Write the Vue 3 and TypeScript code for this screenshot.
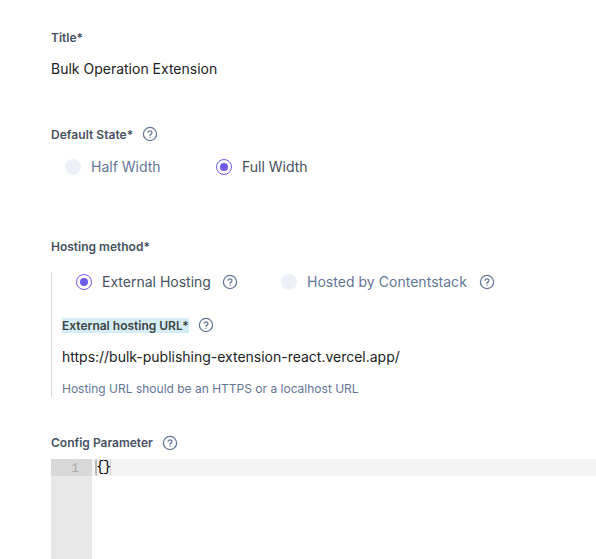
<script setup lang="ts">
import { h } from 'vue'

const HelpIcon = () =>
  h('svg', { class: 'help', viewBox: '0 0 16 16', width: 16, height: 16, fill: 'none', stroke: '#647696', 'stroke-width': 1.25, 'stroke-linecap': 'round', 'stroke-linejoin': 'round' }, [
    h('circle', { cx: 8, cy: 8, r: 6.6 }),
    h('path', { d: 'M6.1 6.2a2 2 0 0 1 3.9.5c0 1.3-2 1.5-2 2.6' }),
    h('path', { d: 'M8 11.2v.1' }),
  ])
</script>

<template>
  <main class="form">
    <section class="field title">
      <div class="label raised"><span>Title*</span></div>
      <div class="value">Bulk Operation Extension</div>
    </section>
    <section class="field state">
      <div class="label"><span class="state-name">Default State*</span><HelpIcon /></div>
      <div class="options">
        <div class="option half"><i class="radio"></i><span>Half Width</span></div>
        <div class="option on"><i class="radio"></i><span>Full Width</span></div>
      </div>
    </section>
    <section class="field hosting">
      <div class="label raised"><span>Hosting method*</span></div>
      <div class="group">
        <div class="options">
          <div class="option external on"><i class="radio"></i><span>External Hosting</span><HelpIcon /></div>
          <div class="option hosted"><i class="radio"></i><span>Hosted by Contentstack</span><HelpIcon /></div>
        </div>
        <div class="label url-label"><mark>External hosting URL*</mark><HelpIcon /></div>
        <div class="value url">https://bulk-publishing-extension-react.vercel.app/</div>
        <div class="hint">Hosting URL should be an HTTPS or a localhost URL</div>
      </div>
    </section>
    <section class="config">
      <div class="label raised"><span>Config Parameter</span><HelpIcon /></div>
      <div class="editor">
        <div class="gutter"><div class="number">1</div></div>
        <div class="code"><div class="line"><span class="brace open">{</span><span class="brace close">}</span></div></div>
      </div>
    </section>
  </main>
</template>

<style>
body { background: #fff; overflow: hidden; }
</style>
<style scoped>
.form { height: 559px; box-sizing: border-box; padding: 28px 0 0 51px; font-family: Inter, sans-serif; color: #222; overflow: hidden; }
.label { display: flex; align-items: center; height: 20px; font-size: 12px; font-weight: 600; color: #475161; white-space: nowrap; }
.raised span { padding-bottom: 2px; }
.state-name { letter-spacing: .04px; }
.label :deep(.help) { margin-left: 9px; }
.value { font-size: 14px; line-height: 20px; margin-top: 11px; }
.title { height: 96px; }
.state { height: 113px; }
.options { display: flex; height: 20px; }
.state .options { margin-top: 13px; padding-left: 14px; }
.option { display: flex; align-items: center; font-size: 14px; color: #647696; white-space: nowrap; }
.option span { padding-bottom: 1px; }
.half { width: 151px; }
.external { width: 205px; }
.radio { width: 16px; height: 16px; border-radius: 50%; background: #edf1f7; margin-right: 10px; box-sizing: border-box; flex: none; }
.on { color: #475161; }
.on .radio { display: grid; place-items: center; border: 1px solid #6c5ce7; background: #fff; }
.on .radio::after { content: ''; width: 8px; height: 8px; border-radius: 50%; background: #6c5ce7; }
.option :deep(.help) { margin-left: 11px; }
.hosted span { letter-spacing: .03px; }
.hosted :deep(.help) { margin-left: 12px; }
.group { height: 125px; box-sizing: border-box; margin-top: 15px; border-left: 1px solid #d3d7df; padding-left: 10px; }
.group .options { padding-left: 14px; }
.url-label { margin-top: 23px; }
mark { background: #d5edf7; color: #3f4444; line-height: 15px; }
.url { margin-top: 12px; letter-spacing: -.01px; }
.hint { margin-top: 12px; font-size: 12px; line-height: 20px; color: #647696; }
.config { margin-top: 36px; }
.editor { display: flex; height: 110px; margin-top: 6px; }
.gutter { width: 41px; background: #e8e8e8; }
.number { height: 17px; box-sizing: border-box; padding-right: 13px; text-align: right; color: #aaa; background: #d8d8d8; font: 13px/19px "Liberation Mono", monospace; }
.code { flex: 1; }
.line { display: flex; height: 17px; padding-left: 3px; background: #f4f4f4; color: #000; font: 14px/17px "Liberation Mono", monospace; }
.brace { box-sizing: border-box; width: 8px; height: 17px; }
.open { border-left: 2px solid #b8b8b8; border-radius: 2px; text-indent: -1px; }
.close { border-right: 1px solid #d0d0d0; border-radius: 2px; }
</style>
